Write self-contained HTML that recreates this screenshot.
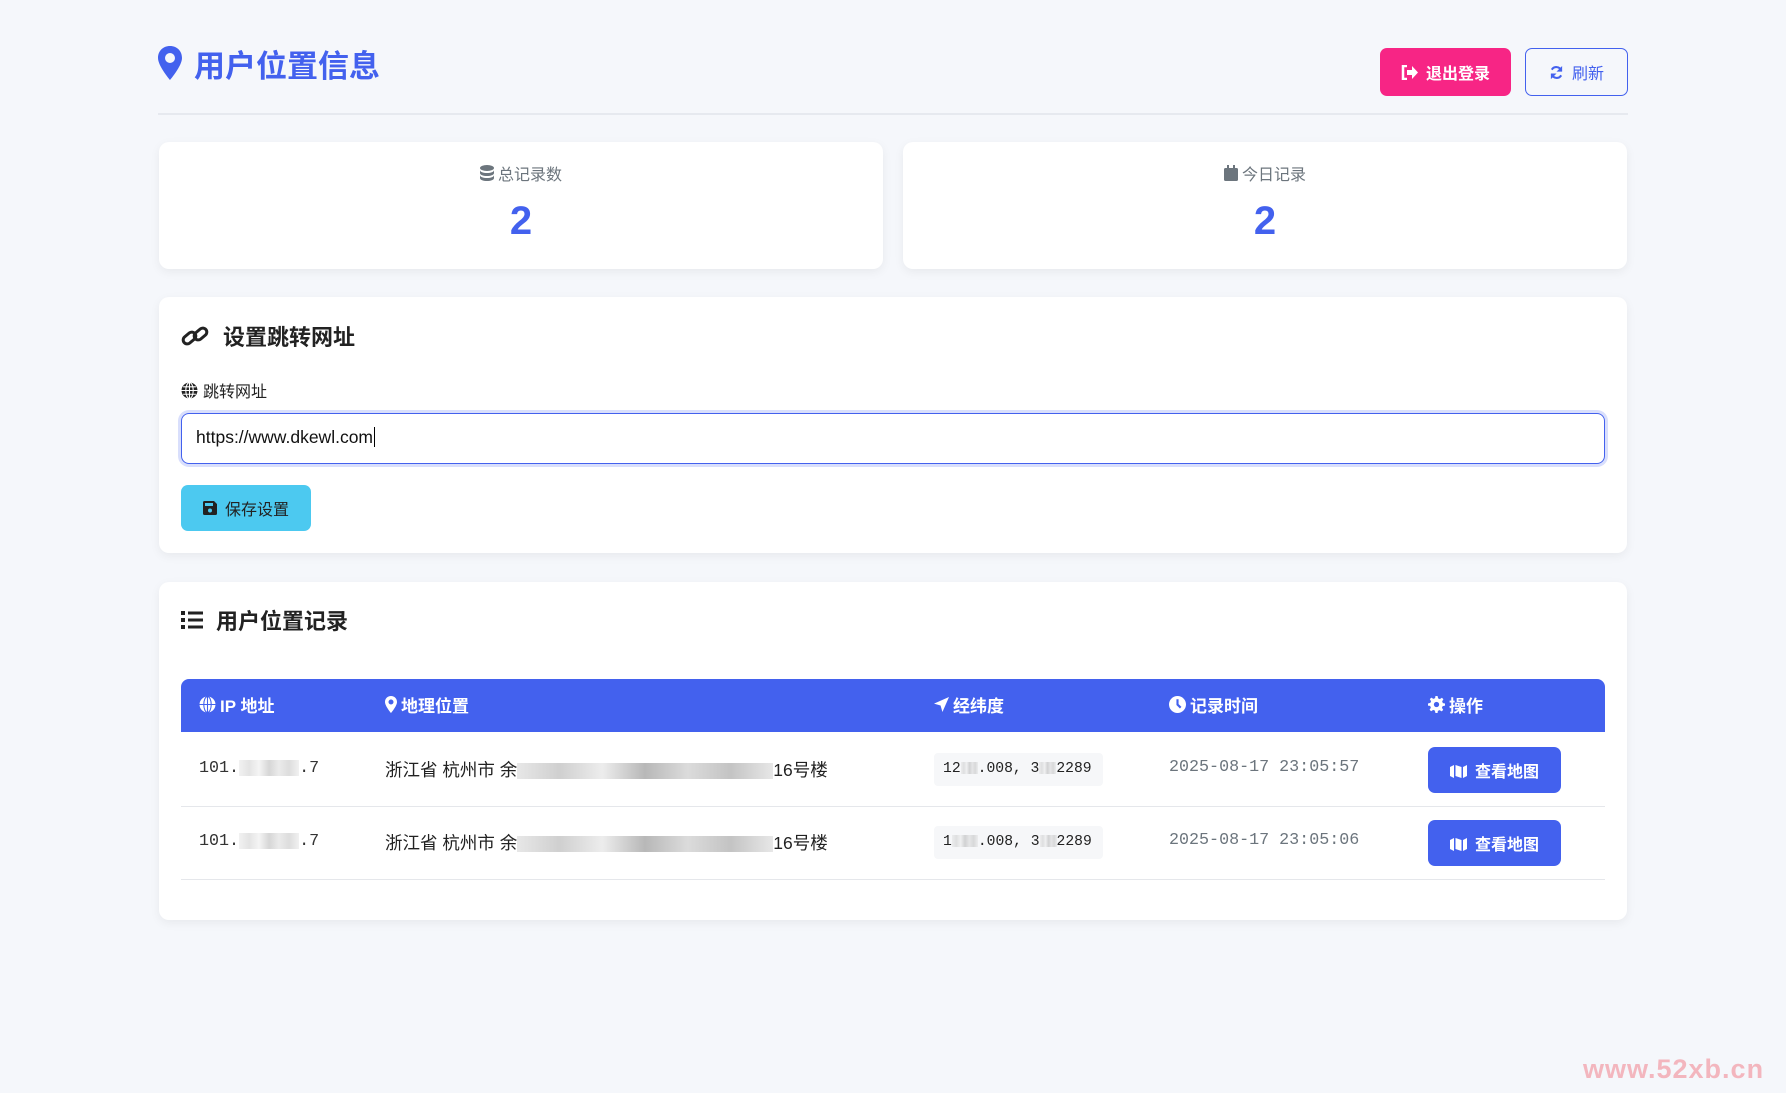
<!DOCTYPE html>
<html><head><meta charset="utf-8"><style>
*{box-sizing:border-box;margin:0;padding:0}
body{width:1786px;height:1093px;background:#f5f7fb;font-family:"Liberation Sans","Noto Sans CJK SC",sans-serif;position:relative;overflow:hidden;color:#212529}
.a{position:absolute}
.card{position:absolute;background:#fff;border-radius:10px;box-shadow:0 3px 10px rgba(0,0,0,.06)}
.t{display:flex;align-items:center}
.mono{font-family:"Liberation Mono","DejaVu Sans Mono",monospace}
.blur{display:inline-block;background:linear-gradient(90deg,#ddd,#bbb,#e5e5e5,#999,#ccc,#aaa,#ddd);height:16px;vertical-align:middle}
.btn{position:absolute;background:#4361ee;color:#fff;border-radius:7px;font-weight:bold;font-size:16px;display:flex;align-items:center;justify-content:center;gap:8px}
</style></head><body>
<div class="a t" style="left:158px;top:44px;height:38px;color:#4361ee;font-size:31px;font-weight:bold;gap:12px">
<svg width="24" height="34" viewBox="0 0 24 34"><path d="M12 0C5 0 0 5 0 12c0 8 12 22 12 22s12-14 12-22C24 5 19 0 12 0zm0 17a5 5 0 1 1 0-10 5 5 0 0 1 0 10z" fill="#4361ee"/></svg>用户位置信息</div>
<div class="a t" style="left:1380px;top:48px;width:131px;height:48px;background:#f72585;border-radius:7px;color:#fff;font-weight:bold;font-size:16px;justify-content:center;gap:8px">
<svg width="17" height="15" viewBox="0 0 17 15"><path d="M6 1H2v13h4" stroke="#fff" stroke-width="2.5" fill="none"/><path d="M6 5h5V1l6 6.5-6 6.5V10H6z" fill="#fff"/></svg>退出登录</div>
<div class="a t" style="left:1525px;top:48px;width:103px;height:48px;border:1.5px solid #4361ee;border-radius:7px;color:#4361ee;font-size:16px;justify-content:center;gap:8px">
<svg width="15" height="15" viewBox="0 0 16 16"><path d="M13 6A5.5 5.5 0 0 0 3 5M3 10a5.5 5.5 0 0 0 10 1" stroke="#4361ee" stroke-width="2.2" fill="none"/><path d="M14 1v6H8zM2 15V9h6z" fill="#4361ee"/></svg>刷新</div>
<div class="a" style="left:158px;top:113px;width:1470px;height:2px;background:#e6e9ef"></div>

<div class="card" style="left:159px;top:142px;width:724px;height:127px"></div>
<div class="a t" style="left:159px;top:161px;width:724px;justify-content:center;color:#6c757d;font-size:16px;gap:4px">
<svg width="14" height="16" viewBox="0 0 14 16"><ellipse cx="7" cy="3" rx="7" ry="3" fill="#6c757d"/><path d="M0 5c0 4 14 4 14 0v3c0 4-14 4-14 0zm0 5c0 4 14 4 14 0v3c0 4-14 4-14 0z" fill="#6c757d"/></svg>总记录数</div>
<div class="a" style="left:159px;top:199px;width:724px;text-align:center;color:#4361ee;font-size:40px;font-weight:bold">2</div>
<div class="card" style="left:903px;top:142px;width:724px;height:127px"></div>
<div class="a t" style="left:903px;top:161px;width:724px;justify-content:center;color:#6c757d;font-size:16px;gap:4px">
<svg width="14" height="16" viewBox="0 0 14 16"><rect x="3" y="0" width="2" height="4" fill="#6c757d"/><rect x="9" y="0" width="2" height="4" fill="#6c757d"/><rect x="0" y="3" width="14" height="13" rx="1.5" fill="#6c757d"/></svg>今日记录</div>
<div class="a" style="left:903px;top:199px;width:724px;text-align:center;color:#4361ee;font-size:40px;font-weight:bold">2</div>

<div class="card" style="left:159px;top:297px;width:1468px;height:256px"></div>
<div class="a t" style="left:181px;top:320px;font-size:22px;font-weight:bold;gap:14px;color:#222">
<svg width="28" height="24" viewBox="0 0 28 24"><g stroke="#222" stroke-width="3" fill="none"><rect x="1.5" y="10" width="14" height="8" rx="4" transform="rotate(-40 8.5 14)"/><rect x="12.5" y="6" width="14" height="8" rx="4" transform="rotate(-40 19.5 10)"/></g></svg>设置跳转网址</div>
<div class="a t" style="left:181px;top:378px;font-size:16px;gap:5px;color:#222">
<svg width="17" height="17" viewBox="0 0 16 16"><circle cx="8" cy="8" r="7.5" fill="#222"/><path d="M0.5 8h15M8 .5v15M2 4.5h12M2 11.5h12" stroke="#fff" stroke-width="1"/><ellipse cx="8" cy="8" rx="3.5" ry="7.5" stroke="#fff" stroke-width="1" fill="none"/></svg>跳转网址</div>
<div class="a" style="left:181px;top:413px;width:1424px;height:51px;border:1.5px solid #4361ee;border-radius:8px;box-shadow:0 0 0 3px rgba(67,97,238,.2);font-size:17.5px;padding:13px 14px;color:#111">https://www.dkewl.com<span style="border-left:1px solid #000;margin-left:1px"></span></div>
<div class="a t" style="left:181px;top:485px;width:130px;height:46px;background:#4cc9f0;border-radius:7px;justify-content:center;gap:8px;font-size:16px;color:#222">
<svg width="14" height="14" viewBox="0 0 14 14"><path d="M0 1.5A1.5 1.5 0 0 1 1.5 0H11l3 3v9.5a1.5 1.5 0 0 1-1.5 1.5h-11A1.5 1.5 0 0 1 0 12.5z" fill="#222"/><rect x="2" y="2" width="8" height="3" fill="#4cc9f0"/><circle cx="7" cy="9.5" r="2" fill="#4cc9f0"/></svg>保存设置</div>

<div class="card" style="left:159px;top:582px;width:1468px;height:338px"></div>
<div class="a t" style="left:181px;top:604px;font-size:22px;font-weight:bold;gap:13px;color:#222">
<svg width="22" height="18" viewBox="0 0 22 18"><g fill="#222"><rect x="0" y="0" width="4" height="4"/><rect x="0" y="7" width="4" height="4"/><rect x="0" y="14" width="4" height="4"/><rect x="7" y="0.5" width="15" height="3"/><rect x="7" y="7.5" width="15" height="3"/><rect x="7" y="14.5" width="15" height="3"/></g></svg>用户位置记录</div>
<div class="a" style="left:181px;top:679px;width:1424px;height:53px;background:#4361ee;border-radius:8px 8px 0 0"></div>
<div class="a t" style="left:199px;top:692px;color:#fff;font-weight:bold;font-size:17px;gap:4px"><svg width="17" height="17" viewBox="0 0 16 16"><circle cx="8" cy="8" r="7.5" fill="#fff"/><path d="M.5 8h15M8 .5v15" stroke="#4361ee" stroke-width="1"/><ellipse cx="8" cy="8" rx="3.5" ry="7.5" stroke="#4361ee" fill="none"/></svg>IP 地址</div>
<div class="a t" style="left:385px;top:692px;color:#fff;font-weight:bold;font-size:17px;gap:4px"><svg width="12" height="17" viewBox="0 0 24 34"><path d="M12 0C5 0 0 5 0 12c0 8 12 22 12 22s12-14 12-22C24 5 19 0 12 0zm0 17a5 5 0 1 1 0-10 5 5 0 0 1 0 10z" fill="#fff"/></svg>地理位置</div>
<div class="a t" style="left:934px;top:692px;color:#fff;font-weight:bold;font-size:17px;gap:4px"><svg width="15" height="15" viewBox="0 0 16 16"><path d="M16 0L0 7l7 2 2 7z" fill="#fff"/></svg>经纬度</div>
<div class="a t" style="left:1169px;top:692px;color:#fff;font-weight:bold;font-size:17px;gap:4px"><svg width="17" height="17" viewBox="0 0 16 16"><circle cx="8" cy="8" r="8" fill="#fff"/><path d="M8 3v5l3 3" stroke="#4361ee" stroke-width="2" fill="none"/></svg>记录时间</div>
<div class="a t" style="left:1428px;top:692px;color:#fff;font-weight:bold;font-size:17px;gap:4px"><svg width="17" height="17" viewBox="0 0 16 16"><path d="M7 0h2l.5 2.2 1.6.7 2-1.2 1.4 1.4-1.2 2 .7 1.6L16 7v2l-2.2.5-.7 1.6 1.2 2-1.4 1.4-2-1.2-1.6.7L9 16H7l-.5-2.2-1.6-.7-2 1.2-1.4-1.4 1.2-2-.7-1.6L0 9V7l2.2-.5.7-1.6-1.2-2 1.4-1.4 2 1.2 1.6-.7z" fill="#fff"/><circle cx="8" cy="8" r="2.5" fill="#4361ee"/></svg>操作</div>

<div class="a" style="left:181px;top:806px;width:1424px;height:1px;background:#e5e7eb"></div>
<div class="a" style="left:181px;top:879px;width:1424px;height:1px;background:#e5e7eb"></div>

<div class="a mono" style="left:199px;top:759px;font-size:16.7px;color:#333">101.<span class="blur" style="width:60px;opacity:.4"></span>.7</div>
<div class="a" style="left:385px;top:757px;font-size:17.5px;color:#222">浙江省 杭州市 余<span class="blur" style="width:256px;opacity:.7"></span>16号楼</div>
<div class="a mono" style="left:934px;top:753px;width:169px;height:33px;background:#f6f7f9;border-radius:4px;font-size:14.7px;padding:8px 9px;color:#222">12<span class="blur" style="width:17px;height:12px;opacity:.4"></span>.008, 3<span class="blur" style="width:17px;height:12px;opacity:.4"></span>2289</div>
<div class="a mono" style="left:1169px;top:758px;font-size:16.7px;color:#6c757d">2025-08-17 23:05:57</div>
<div class="btn" style="left:1428px;top:747px;width:133px;height:46px"><svg width="17" height="15" viewBox="0 0 17 15"><path d="M0 4l4-2v13l-4-2zM5.5 2l6 2v11l-6-2zM13 4l4-2v11l-4 2z" fill="#fff"/></svg>查看地图</div>

<div class="a mono" style="left:199px;top:832px;font-size:16.7px;color:#333">101.<span class="blur" style="width:60px;opacity:.4"></span>.7</div>
<div class="a" style="left:385px;top:830px;font-size:17.5px;color:#222">浙江省 杭州市 余<span class="blur" style="width:256px;opacity:.7"></span>16号楼</div>
<div class="a mono" style="left:934px;top:826px;width:169px;height:33px;background:#f6f7f9;border-radius:4px;font-size:14.7px;padding:8px 9px;color:#222">1<span class="blur" style="width:26px;height:12px;opacity:.4"></span>.008, 3<span class="blur" style="width:17px;height:12px;opacity:.4"></span>2289</div>
<div class="a mono" style="left:1169px;top:831px;font-size:16.7px;color:#6c757d">2025-08-17 23:05:06</div>
<div class="btn" style="left:1428px;top:820px;width:133px;height:46px"><svg width="17" height="15" viewBox="0 0 17 15"><path d="M0 4l4-2v13l-4-2zM5.5 2l6 2v11l-6-2zM13 4l4-2v11l-4 2z" fill="#fff"/></svg>查看地图</div>

<div class="a" style="left:1583px;top:1054px;font-size:27px;font-weight:bold;color:rgba(240,130,140,.55);letter-spacing:1px">www.52xb.cn</div>
</body></html>
